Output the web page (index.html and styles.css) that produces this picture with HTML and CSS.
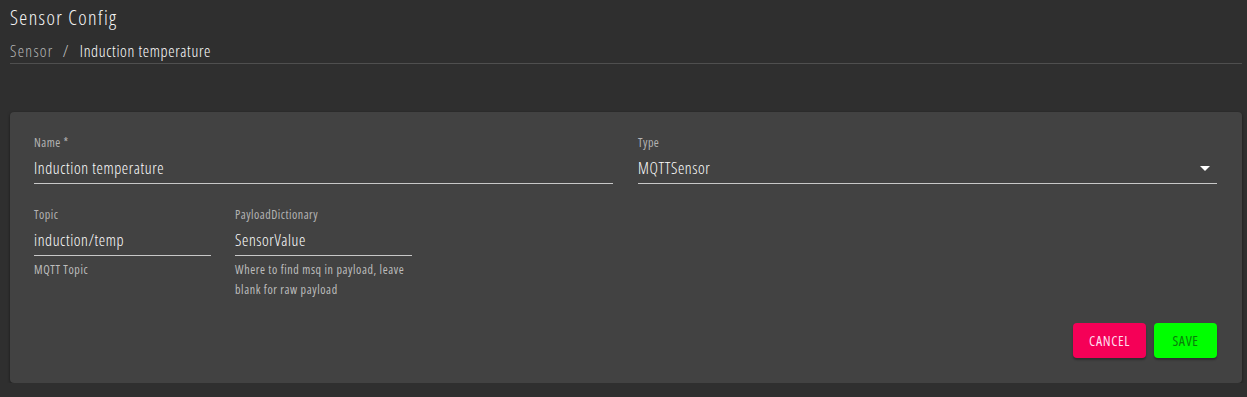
FILE: index.html
```html
<!DOCTYPE html>
<html>
<head>
<meta charset="utf-8">
<link rel="stylesheet" href="styles.css">
</head>
<body>
<div class="page">
  <header class="head">
    <h1 class="title">Sensor Config</h1>
    <nav class="crumbs"><span class="crumb-link">Sensor</span><span class="sep">/</span><span class="crumb-cur">Induction temperature</span></nav>
  </header>
  <section class="card">
    <div class="row two">
      <div class="field">
        <label class="label">Name *</label>
        <div class="input">Induction temperature</div>
      </div>
      <div class="field">
        <label class="label">Type</label>
        <div class="input select">MQTTSensor<svg class="caret" width="10" height="5" viewBox="0 0 10 5"><path d="M0 0h10L5 5z" fill="#fff"/></svg></div>
      </div>
    </div>
    <div class="row small">
      <div class="field narrow">
        <label class="label">Topic</label>
        <div class="input">induction/temp</div>
        <p class="help">MQTT Topic</p>
      </div>
      <div class="field narrow">
        <label class="label">PayloadDictionary</label>
        <div class="input">SensorValue</div>
        <p class="help">Where to find msq in payload, leave blank for raw payload</p>
      </div>
    </div>
    <div class="actions">
      <button class="btn cancel">CANCEL</button>
      <button class="btn save">SAVE</button>
    </div>
  </section>
</div>
</body>
</html>
```
FILE: styles.css
```css
html, body {
  margin: 0;
  background: #2f2f2f;
  font-family: "Open Sans", "Roboto", sans-serif;
  font-stretch: 75%;
  font-weight: 300;
  color: #fff;
}
.page {
  padding: 0 5px 0 10px;
}
.head {
  padding-top: 5px;
  border-bottom: 1px solid #4f4f4f;
}
.title {
  margin: 0;
  font-size: 20px;
  font-weight: 300;
  letter-spacing: 1.4px;
  line-height: 26px;
  color: #f7f7f7;
}
.crumbs {
  margin-top: 11px;
  height: 21px;
  font-size: 16px;
  letter-spacing: 0.65px;
  line-height: 18px;
}
.crumb-link { color: #b8b8b8; letter-spacing: 1.3px; }
.sep { color: #d0d0d0; margin: 0 11px 0 9px; }
.crumb-cur { color: #fff; }
.card {
  margin-top: 48px;
  background: #424242;
  border-radius: 4px;
  box-shadow: 0 1px 3px rgba(0,0,0,.5);
  padding: 24px 25px 25px 24px;
  height: 271px;
  box-sizing: border-box;
  display: flex;
  flex-direction: column;
}
.row { display: flex; gap: 25px; }
.row.two .field { flex: 1; }
.row.small { margin-top: 24px; gap: 24px; }
.field.narrow { width: 177px; }
.label {
  display: block;
  font-size: 12px;
  font-weight: 400;
  letter-spacing: 0.5px;
  line-height: 14px;
  color: #b4b4b4;
}
.input {
  margin-top: 8px;
  font-size: 16px;
  letter-spacing: 0.6px;
  line-height: 20px;
  padding-bottom: 5px;
  border-bottom: 1px solid #c8c8c8;
  color: #fff;
  position: relative;
}
.select .caret {
  position: absolute;
  right: 7px;
  top: 8px;
}
.help {
  margin: 4px 0 0;
  font-size: 12px;
  font-weight: 400;
  letter-spacing: 0.6px;
  line-height: 20px;
  color: #bdbdbd;
}
.actions {
  margin-top: auto;
  display: flex;
  justify-content: flex-end;
  gap: 8px;
}
.btn {
  border: 0;
  border-radius: 4px;
  height: 35px;
  font-family: inherit;
  font-stretch: 75%;
  font-weight: 400;
  font-size: 14px;
  letter-spacing: 0.6px;
  box-shadow: 0 2px 2px rgba(0,0,0,.3);
}
.cancel { width: 73px; background: #f50057; color: #fde; }
.save { width: 63px; background: #00ff00; color: #0a7d0a; }
```
